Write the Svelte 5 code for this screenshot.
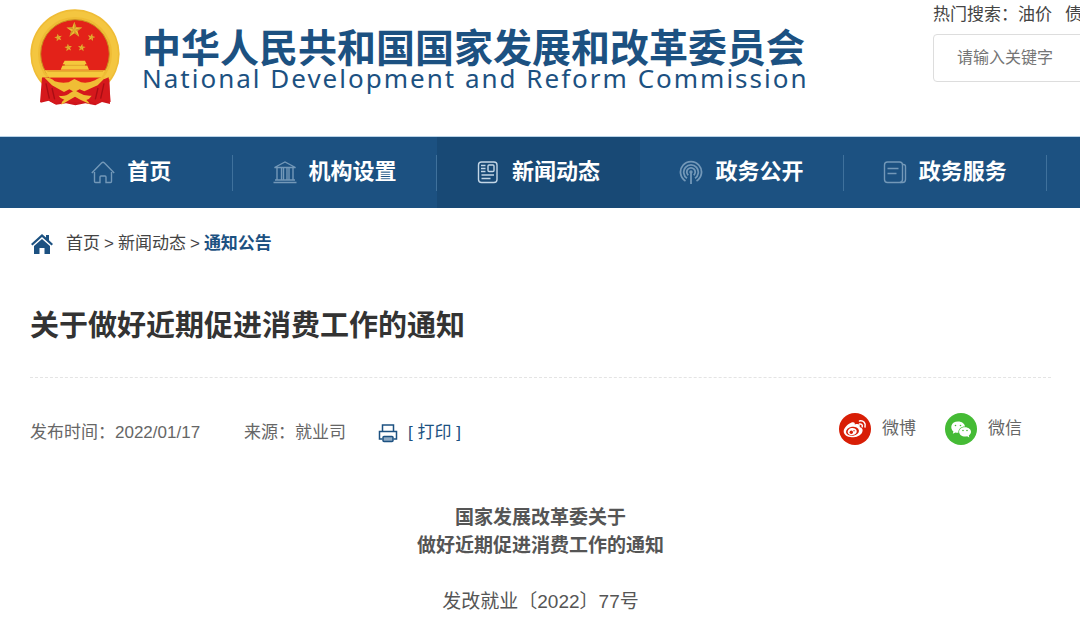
<script>
  let keyword = $state('');

  const navItems = [
    { label: '首页', icon: 'home' },
    { label: '机构设置', icon: 'bank' },
    { label: '新闻动态', icon: 'news', active: true },
    { label: '政务公开', icon: 'signal' },
    { label: '政务服务', icon: 'doc' }
  ];

  const hotWords = ['油价', '债'];
</script>

{#snippet star(x, y, r, turn)}
  <g transform="translate({x} {y}) rotate({turn}) scale({r})">
    <path class="star" d="M0-1L.24-.32.95-.31.38.12.59.81 0 .4-.59.81-.38.12-.95-.31-.24-.32z" />
    <path class="star-shade" d="M0 0L0-1 .24-.32zM0 0L.95-.31.38.12zM0 0L.59.81 0 .4zM0 0L-.59.81-.38.12zM0 0L-.95-.31-.24-.32z" />
  </g>
{/snippet}

<header>
  <a class="brand" href="/">
    <svg class="emblem" viewBox="30 25 270 291" aria-hidden="true">
      <circle cx="165" cy="160" r="134" fill="#efbc35" />
      <circle cx="165" cy="160" r="120" fill="none" stroke="#f4c640" stroke-width="18" />
      <path fill="#cf151c" d="M70 230L62 306l24-6 22 12 30-4 28 6 30-6 30 6 20-10 24 6-2-74z" />
      <circle cx="165" cy="160" r="103" fill="#e32219" stroke="#c98d20" stroke-width="3" />
      {@render star(163, 88, 25, 0)}
      {@render star(115, 111, 12, -12)}
      {@render star(214, 110, 12, 12)}
      {@render star(145, 141, 12, -8)}
      {@render star(185, 141, 12, 8)}
      <path fill="#f5c83c" d="M134 180h61l5 11h-5v4h7l5 12H122l5-12h7v-4h-6z" />
      <path fill="#f5c83c" d="M74 209h183q-5 12-14 22H88q-9-10-14-22z" />
      <path fill="none" stroke="#d69622" stroke-width="2" d="M128 194h74M82 212h167" />
      <path fill="#d5181c" d="M66 230l32 14q28 24 66 26 40-2 68-26l34-14 6 74-23-6-18 12-22-9-39 4-42-4-23 9-22-12-23 7z" />
      <path fill="#e32219" d="M88 231h155l-36 24H124z" />
      <path fill="#f0bd35" d="M72 230q20 0 32 12 20 7 42 3l17-10 20 10q22 4 42-6 12-10 32-9l-24 24-40 18-14-6-16 8-15-8-16 8-36-20z" />
      <path fill="#f0bd35" d="M116 285q22 3 34-8l14-8 15 8q14 10 36 8-6 10-16 13 9 7 10 12l-28-13-16-9-17 10-24 14q0-10 9-15-13-4-17-12z" />
      <path fill="none" stroke="#a80e14" stroke-width="4" d="M78 248l10 46M252 248l-10 46M96 262l8 34M234 262l-8 34" />
    </svg>
    <span class="names">
      <span class="name-zh">中华人民共和国国家发展和改革委员会</span>
      <span class="name-en">National Development and Reform Commission</span>
    </span>
  </a>

  <form class="search" role="search">
    <p class="hot">
      热门搜索：{#each hotWords as word}<a href="/search">{word}</a>{/each}
    </p>
    <input type="search" aria-label="搜索" placeholder="请输入关键字" bind:value={keyword} />
  </form>
</header>

<nav>
  <ul>
    {#each navItems as item}
      <li class:active={item.active}>
        <a href="/{item.icon}">
          <svg class="nav-icon" viewBox="0 0 24 24" aria-hidden="true">
            {#if item.icon === 'home'}
              <path d="M.8 13L10.5 3q1.5-1.4 3 0l9.700 10M3.500 12v9.500q0 1 1 1H9V17q0-1 1-1h4q1 0 1 1v5.500h4.500q1 0 1-1V12" />
            {:else if item.icon === 'bank'}
              <path d="M1.500 7.500L12 2l10.500 5.500zM.5 22.500h23M2 20h20M4 8v12M8.500 8v12M10.500 8v12M14 8v12M16 8v12M20 8v12" />
            {:else if item.icon === 'news'}
              <rect x="2.500" y="2" width="18.500" height="20.500" rx="3" />
              <rect x="12" y="5" width="6" height="6.500" rx="1" />
              <path d="M5 5.500h4.500M5 8.500h4.500M5 11.500h4.500M5.500 15h12.500M5.500 18.500h9" />
            {:else if item.icon === 'signal'}
              <path stroke-width="1.800" d="M12 12v12M6.500 21a10.500 10.500 0 1 1 11 0M8 18.300a7.300 7.300 0 1 1 8 0M9.300 15.200a4.200 4.200 0 1 1 5.400 0" />
              <circle cx="12" cy="12" r="1" />
            {:else}
              <rect x="1.500" y="2" width="18" height="20.500" rx="3" />
              <path d="M19.500 4.500h1q2 0 2 2v13q0 3-3 3H17M4.500 8.500h11M4.500 13.500h9" />
            {/if}
          </svg>
          {item.label}
        </a>
      </li>
    {/each}
  </ul>
</nav>

<main>
  <div class="crumbs">
    <svg viewBox="0 0 24 22" aria-hidden="true">
      <path d="M12 1L1 11l1.500 1.600L12 4l9.500 8.600L23 11l-4-3.700V2h-3v2.600z" />
      <path d="M4 13l8-7 8 7v8h-5.500v-6h-5v6H4z" />
    </svg>
    <a href="/">首页</a> &gt; <a href="/xwdt">新闻动态</a> &gt; <a class="current" href="/tzgg">通知公告</a>
  </div>

  <h1>关于做好近期促进消费工作的通知</h1>

  <div class="meta">
    <span class="date">发布时间：2022/01/17</span>
    <span class="source">来源：就业司</span>
    <button class="print">
      <svg viewBox="0 0 20 20" aria-hidden="true">
        <path d="M4.500 8.500V2h11v6.500M4.500 16H1.500V8.500h17V16h-3" />
        <rect class="tray" x="5" y="13.500" width="10" height="5" rx="1" />
      </svg>
      [ 打印 ]
    </button>

    <div class="share">
      <a href="/weibo">
        <svg viewBox="0 0 32 32" aria-hidden="true">
          <circle cx="16" cy="16" r="16" fill="#d81e06" />
          <path fill="#fff" d="M12.500 9.500c2-.8 3.700-.3 3.300 2 3-1 5.800-.4 4.900 2.500 2.600.9 3.700 2.900 2.400 5.400-1.700 3.300-5.800 4.900-10.300 4.800-4.800-.1-8.200-2.500-8.100-5.900.1-3.200 4-7.300 7.800-8.800z" />
          <ellipse cx="13.500" cy="18.300" rx="6.500" ry="4.500" fill="#d81e06" transform="rotate(-8 13.500 18.300)" />
          <ellipse cx="13.200" cy="18.600" rx="4.600" ry="3.600" fill="#fff" transform="rotate(-12 13.200 18.600)" />
          <circle cx="12.300" cy="19.200" r="1.700" fill="#d81e06" />
          <circle cx="15" cy="17.800" r=".7" fill="#d81e06" />
          <path fill="none" stroke="#fff" stroke-width="1.500" stroke-linecap="round" d="M20.500 11c1.800-.4 3.200 1 2.700 2.800M20.500 8c4-.8 6.600 2.400 5.500 6" />
        </svg>
        微博
      </a>
      <a href="/weixin">
        <svg viewBox="0 0 32 32" aria-hidden="true">
          <circle cx="16" cy="16" r="16" fill="#45bb35" />
          <path fill="#fff" d="M13 8.500c4 0 6.700 2.300 7 5-4 0-7 2.500-6.600 6.300-1 .1-2 0-3-.3l-2.600 1.300.6-2.300C4.500 15.300 6 8.500 13 8.500z" />
          <path fill="#fff" d="M20 14.200c3.600 0 6 2.200 6 4.600 0 1.600-.9 2.800-2.200 3.700l.5 2-2.200-1.200c-4.300 1-8-1.300-8-4.500 0-2.500 2.500-4.600 5.900-4.600z" />
          <path stroke="#45bb35" stroke-width="1.600" stroke-linecap="round" d="M10.500 12.500h0M15.500 12.500h0M18 17.500h0M22 17.500h0" />
        </svg>
        微信
      </a>
    </div>
  </div>

  <article>
    <h2>国家发展改革委关于<br />做好近期促进消费工作的通知</h2>
    <p>发改就业〔2022〕77号</p>
  </article>
</main>

<style>
  :global(body) {
    margin: 0;
    background: #fff;
    color: #444;
    font-family: 'Liberation Sans', Arial, 'Noto Sans CJK SC', sans-serif;
    font-size: 17px;
    line-height: 24px;
    overflow-x: hidden;
  }

  a {
    color: inherit;
    text-decoration: none;
  }

  header {
    display: flex;
    justify-content: space-between;
    align-items: flex-start;
    padding-left: 30px;
    height: 136px;
    overflow: hidden;
  }

  .brand {
    display: flex;
    gap: 22px;
    padding-top: 9px;
    color: #1c5181;
    white-space: nowrap;
  }

  .emblem {
    width: 90px;
    height: 97px;
  }

  .star {
    fill: #f0bd35;
  }

  .star-shade {
    fill: #b87d1c;
    opacity: 0.6;
  }

  .names {
    display: flex;
    flex-direction: column;
    padding-top: 16px;
  }

  .name-zh {
    font-family: 'Noto Sans CJK SC', sans-serif;
    font-size: 39px;
    font-weight: 700;
    line-height: 40px;
  }

  .name-en {
    font-family: 'Noto Sans', sans-serif;
    font-size: 26px;
    letter-spacing: 2px;
    line-height: 26px;
  }

  .search {
    flex: none;
    width: 147px;
    padding-top: 3px;
    white-space: nowrap;
  }

  .hot {
    margin: 0 0 7px;
  }

  .hot a + a {
    margin-left: 13px;
  }

  .search input {
    box-sizing: border-box;
    width: 320px;
    height: 48px;
    padding: 0 23px;
    border: 1px solid #ddd;
    border-radius: 4px;
    background: #fff;
    font: inherit;
    font-size: 16px;
    appearance: none;
  }

  .search input::placeholder {
    color: #757575;
  }

  nav {
    border-top: 1px solid #b9d3e8;
    background: #1c5181;
    color: #fff;
  }

  ul {
    display: grid;
    grid-template-columns: repeat(5, 1fr);
    margin: 0 33px 0 30px;
    padding: 0;
    list-style: none;
  }

  li {
    display: flex;
    align-items: center;
    height: 71px;
  }

  li a {
    box-sizing: border-box;
    flex: 1;
    display: flex;
    justify-content: center;
    align-items: center;
    gap: 12px;
    height: 36px;
    padding-bottom: 2px;
    border-right: 1px solid #3f719c;
    font-size: 22px;
    font-weight: 700;
    white-space: nowrap;
  }

  li.active {
    background: #184975;
  }

  li.active a {
    border-color: transparent;
  }

  .nav-icon {
    width: 24px;
    height: 24px;
    fill: none;
    stroke: #7398b8;
    stroke-width: 1.4;
  }

  li.active .nav-icon {
    stroke: #c3d6e6;
  }

  main {
    padding: 0 29px 0 30px;
  }

  .crumbs {
    display: flex;
    align-items: center;
    gap: 4px;
    padding-top: 24px;
  }

  .crumbs svg {
    width: 24px;
    height: 22px;
    margin-right: 8px;
    fill: #1c5181;
  }

  .crumbs .current {
    color: #1c5181;
    font-weight: 700;
  }

  h1 {
    margin: 0;
    padding: 49px 0 30px;
    border-bottom: 1px dashed #e4e4e4;
    color: #333;
    font-size: 29px;
    line-height: 42px;
  }

  .meta {
    display: flex;
    align-items: flex-end;
    padding-top: 35px;
    color: #666;
  }

  .source {
    margin-left: 44px;
  }

  .print {
    display: flex;
    align-items: center;
    gap: 10px;
    margin-left: 32px;
    padding: 0;
    border: 0;
    background: none;
    color: #1c5181;
    font: inherit;
  }

  .print svg {
    width: 20px;
    height: 20px;
    fill: none;
    stroke: #1c5181;
    stroke-width: 1.5;
  }

  .print .tray {
    fill: #8fabc5;
  }

  .share {
    display: flex;
    gap: 29px;
    margin: 0 29px 0 auto;
  }

  .share a {
    display: flex;
    align-items: center;
    gap: 11px;
  }

  .share svg {
    width: 32px;
    height: 32px;
  }

  article {
    padding-top: 59px;
    color: #555;
    font-size: 19px;
    line-height: 28px;
    text-align: center;
  }

  h2 {
    margin: 0 0 28px;
    font-size: 19px;
  }

  p {
    margin: 0;
  }
</style>
